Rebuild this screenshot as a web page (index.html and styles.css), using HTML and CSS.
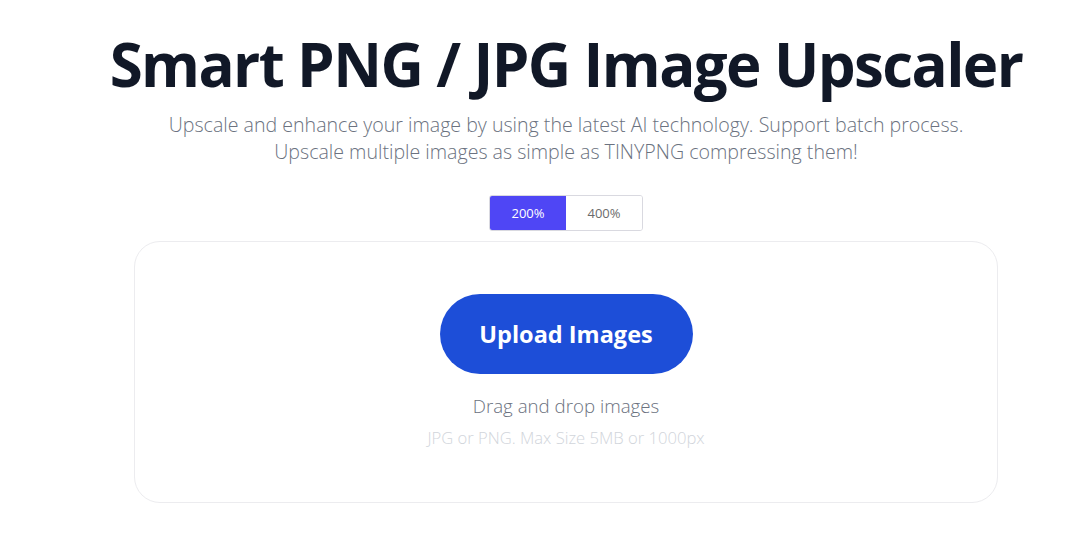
FILE: index.html
```html
<!DOCTYPE html>
<html lang="en">
<head>
<meta charset="utf-8">
<link rel="stylesheet" href="styles.css">
</head>
<body>
<main class="page">
  <h1 class="title">Smart PNG / JPG Image Upscaler</h1>
  <p class="subtitle">Upscale and enhance your image by using the latest AI technology. Support batch process.<br>Upscale multiple images as simple as TINYPNG compressing them!</p>
  <div class="toggle">
    <button class="opt active">200%</button>
    <button class="opt">400%</button>
  </div>
  <section class="drop">
    <button class="upload">Upload Images</button>
    <p class="drag">Drag and drop images</p>
    <p class="hint">JPG or PNG. Max Size 5MB or 1000px</p>
  </section>
</main>
</body>
</html>
```
FILE: styles.css
```css
html, body {
  margin: 0;
  padding: 0;
  background: #ffffff;
}
body {
  font-family: "Open Sans", "Noto Sans", sans-serif;
}
.page {
  margin-left: 48px;
  display: flex;
  flex-direction: column;
  align-items: center;
  padding-top: 24px;
}
.title {
  margin: 0;
  font-size: 60px;
  font-weight: 700;
  line-height: 80px;
  color: #111827;
  letter-spacing: -1.6px;
}
.subtitle {
  margin: 7px 0 0;
  text-align: center;
  font-size: 19.6px;
  line-height: 27px;
  color: #6b7280;
  font-weight: 300;
}
.toggle {
  margin-top: 30px;
  display: flex;
  border: 1px solid #d9d9e0;
  border-radius: 3px;
  overflow: hidden;
}
.opt {
  width: 76px;
  height: 34px;
  border: 0;
  background: #ffffff;
  font-family: inherit;
  font-size: 13px;
  color: #6b6b6b;
  padding: 0;
}
.opt.active {
  background: #4f46f5;
  color: #ffffff;
}
.drop {
  margin-top: 10px;
  width: 862px;
  height: 260px;
  border: 1px solid #ececef;
  border-radius: 26px;
  display: flex;
  flex-direction: column;
  align-items: center;
  box-sizing: content-box;
}
.upload {
  margin-top: 52px;
  width: 253px;
  height: 80px;
  border: 0;
  border-radius: 40px;
  background: #1d4ed8;
  color: #ffffff;
  font-family: inherit;
  font-size: 23.5px;
  font-weight: 700;
}
.drag {
  margin: 20px 0 0;
  font-size: 18.7px;
  line-height: 24px;
  color: #6b7280;
  font-weight: 300;
}
.hint {
  margin: 10px 0 0;
  font-size: 16.6px;
  line-height: 20px;
  color: #d1d5db;
  font-weight: 300;
}
```
